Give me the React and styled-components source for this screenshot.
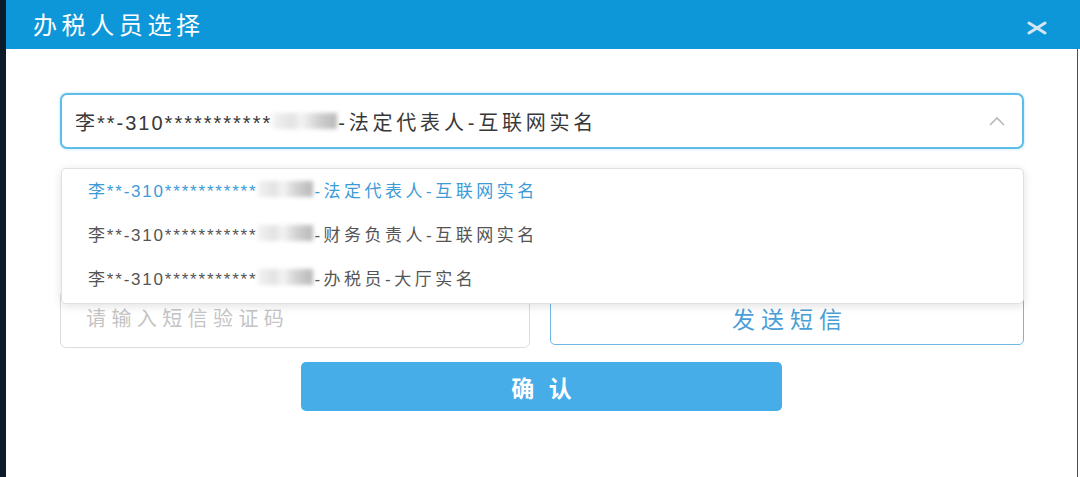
import React from "react";
import styled, { createGlobalStyle } from "styled-components";

const GlobalStyle = createGlobalStyle`
  html, body {
    margin: 0;
    padding: 0;
    background: #ffffff;
  }
  body {
    font-family: "Liberation Sans", "Noto Sans CJK SC", sans-serif;
  }
`;

const options = [
  { id: 1, role: "-法定代表人-互联网实名", active: true },
  { id: 2, role: "-财务负责人-互联网实名", active: false },
  { id: 3, role: "-办税员-大厅实名", active: false },
];

export default function App() {
  return (
    <>
      <GlobalStyle />
      <Dialog>
        <Header>
          <Title>办税人员选择</Title>
          <CloseButton aria-label="close">
            <svg width="20" height="14" viewBox="0 0 20 14">
              <path d="M2 2 L18 12 M18 2 L2 12" stroke="#d3e6f2" strokeWidth="3" strokeLinecap="round" fill="none" />
            </svg>
          </CloseButton>
        </Header>
        <Body>
          <SelectWrap>
            <SelectBox>
              <Value>
                李**-310***********<Blur $w={64} />
                <Role $spacing={3.8}>-法定代表人-互联网实名</Role>
              </Value>
              <svg width="18" height="12" viewBox="0 0 18 12">
                <polyline points="2,10 9,3 16,10" stroke="#b9b9b9" strokeWidth="1.6" fill="none" />
              </svg>
            </SelectBox>
            <Dropdown>
              {options.map((o) => (
                <Option key={o.id} $active={o.active}>
                  李**-310***********<Blur $w={55} />
                  <Role $spacing={3.5}>{o.role}</Role>
                </Option>
              ))}
            </Dropdown>
          </SelectWrap>
          <SmsRow>
            <CodeInput placeholder="请输入短信验证码" />
            <SendButton>发送短信</SendButton>
          </SmsRow>
          <Footer>
            <ConfirmButton>确 认</ConfirmButton>
          </Footer>
        </Body>
      </Dialog>
    </>
  );
}

const Dialog = styled.div`
  width: 1080px;
  height: 477px;
  box-sizing: border-box;
  border-left: 6px solid #0b1b2a;
  display: flex;
  flex-direction: column;
  background: #fff;
`;

const Header = styled.div`
  height: 49px;
  background: #0e97d8;
  display: flex;
  align-items: center;
  justify-content: space-between;
  padding: 0 33px 0 27px;
  flex-shrink: 0;
`;

const Title = styled.h1`
  margin: 0;
  font-size: 24px;
  font-weight: 400;
  letter-spacing: 4.6px;
  color: #ffffff;
  line-height: 1;
  padding-top: 2px;
`;

const CloseButton = styled.button`
  border: none;
  background: none;
  padding: 0;
  display: flex;
  margin-top: 6px;
  cursor: pointer;
`;

const Body = styled.div`
  flex: 1;
  margin-right: 2px;
  border-right: 1px solid #4a4f55;
  padding: 44px 53px 0 54px;
  display: flex;
  flex-direction: column;
`;

const SelectWrap = styled.div`
  position: relative;
`;

const SelectBox = styled.div`
  height: 56px;
  box-sizing: border-box;
  border: 2px solid #5fbde9;
  border-radius: 7px;
  box-shadow: 0 0 3px rgba(95, 189, 233, 0.45);
  display: flex;
  align-items: center;
  justify-content: space-between;
  padding: 0 16px 0 13px;
  background: #fff;
`;

const Value = styled.span`
  font-size: 20px;
  letter-spacing: 2px;
  color: #383838;
  white-space: nowrap;
  display: flex;
  align-items: center;
`;

const Role = styled.span`
  letter-spacing: ${(p) => p.$spacing}px;
`;

const Blur = styled.span`
  display: inline-block;
  width: ${(p) => p.$w}px;
  height: 16px;
  margin: 0 1px;
  background: linear-gradient(90deg, #f2f2f2 0%, #e2e2e2 30%, #f4f4f4 45%, #d2d2d2 70%, #b8b8b8 100%);
  filter: blur(2px);
`;

const Dropdown = styled.ul`
  position: absolute;
  top: 75px;
  left: 1px;
  right: 0;
  margin: 0;
  padding: 0 0 2px;
  list-style: none;
  background: #fff;
  border: 1px solid #e0e0e0;
  border-radius: 5px;
  box-shadow: 0 2px 10px rgba(0, 0, 0, 0.12);
  z-index: 2;
`;

const Option = styled.li`
  height: 44px;
  box-sizing: border-box;
  padding: 0 0 4px 26px;
  display: flex;
  align-items: center;
  font-size: 17px;
  letter-spacing: 1.8px;
  white-space: nowrap;
  color: ${(p) => (p.$active ? "#3d9bd7" : "#555")};
`;

const SmsRow = styled.div`
  margin-top: 141px;
  display: flex;
  gap: 20px;
  align-items: flex-start;
`;

const CodeInput = styled.input`
  width: 470px;
  height: 58px;
  box-sizing: border-box;
  border: 1px solid #dcdcdc;
  border-radius: 6px;
  padding: 0 0 0 25px;
  font-family: "Liberation Sans", "Noto Sans CJK SC", sans-serif;
  font-size: 20px;
  letter-spacing: 5.4px;
  outline: none;
  &::placeholder {
    color: #c4c4c4;
  }
`;

const SendButton = styled.button`
  flex: 1;
  height: 55px;
  box-sizing: border-box;
  border: 1px solid #6fb8e4;
  border-radius: 5px;
  background: #fff;
  color: #4a9fd6;
  font-family: "Liberation Sans", "Noto Sans CJK SC", sans-serif;
  font-size: 23px;
  letter-spacing: 6px;
  padding: 0 0 0 6px;
  cursor: pointer;
`;

const Footer = styled.div`
  display: flex;
  padding-left: 241px;
  margin-top: 14px;
`;

const ConfirmButton = styled.button`
  width: 481px;
  height: 49px;
  border: none;
  border-radius: 5px;
  background: #46ade8;
  color: #fff;
  font-family: "Liberation Sans", "Noto Sans CJK SC", sans-serif;
  font-size: 23px;
  font-weight: 700;
  letter-spacing: 4px;
  padding: 0 0 0 4px;
  cursor: pointer;
`;
